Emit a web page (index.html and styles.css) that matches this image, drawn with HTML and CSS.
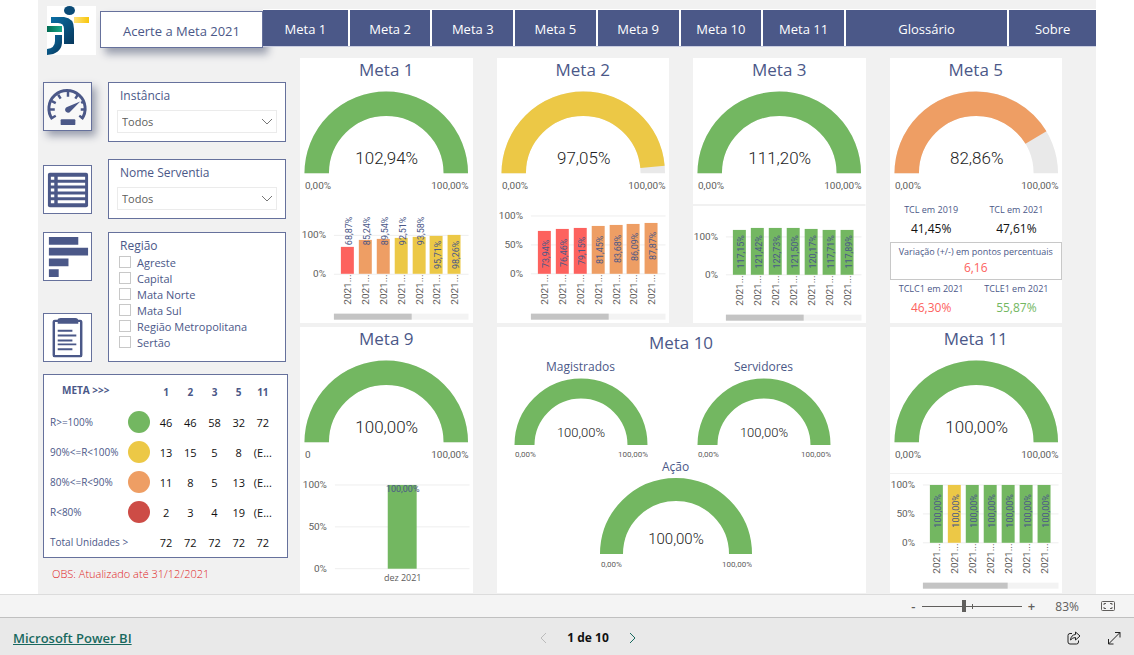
FILE: index.html
```html
<!DOCTYPE html>
<html lang="pt-BR">
<head>
<meta charset="utf-8">
<meta name="viewport" content="width=device-width, initial-scale=1">
<title>Acerte a Meta 2021</title>
<link rel="stylesheet" href="styles.css">
</head>
<body>
<main class="report">
  <header class="top">
    <svg class="logo" viewBox="0 0 49 49" aria-label="Logo" role="img">
      <defs>
        <linearGradient id="blue" x1="0" y1="0" x2="1" y2="1"><stop offset="0" stop-color="#0a6ea5"/><stop offset="1" stop-color="#08385c"/></linearGradient>
        <linearGradient id="green" x1="0" x2="1"><stop offset="0" stop-color="#006b52"/><stop offset="1" stop-color="#19a98a"/></linearGradient>
        <linearGradient id="gold" x1="0" x2="1"><stop offset="0" stop-color="#ffe27a"/><stop offset="1" stop-color="#f8c60c"/></linearGradient>
      </defs>
      <rect width="49" height="49" fill="#fff"/>
      <ellipse cx="22.5" cy="4.5" rx="5.5" ry="4.5" fill="#0a4a76"/>
      <path d="M4 11H17Q27 12 27 23V38H17V23Q17 17 11 17H4Z" fill="url(#blue)"/>
      <path d="M8 29H15V37Q14 48 0 49V43Q8 42 8 35Z" fill="url(#blue)"/>
      <rect x="27" y="11" width="15" height="6" fill="url(#gold)"/>
      <rect x="0" y="20" width="15" height="6" fill="url(#green)"/>
    </svg>
    <nav class="tabs" aria-label="Páginas">
      <button class="tab tab-active" type="button">Acerte a Meta 2021</button>
      <div class="tab-strip">
        <button class="tab" type="button">Meta 1</button>
        <button class="tab" type="button">Meta 2</button>
        <button class="tab" type="button">Meta 3</button>
        <button class="tab" type="button">Meta 5</button>
        <button class="tab" type="button">Meta 9</button>
        <button class="tab" type="button">Meta 10</button>
        <button class="tab" type="button">Meta 11</button>
        <button class="tab tab-wide" type="button">Glossário</button>
        <button class="tab" type="button">Sobre</button>
      </div>
    </nav>
  </header>

  <div class="content">
    <aside class="side">
      <div class="filters">
        <button class="icon-button icon-active" type="button" aria-label="Painel">
          <svg viewBox="0 0 48 48">
            <path d="M8.5 37A18.5 18.5 0 1 1 38.5 37" fill="none" stroke="#4b5888" stroke-width="3"/>
            <path d="M24.5 9V14M14.500 12L17 16M8 18.500L12 20.500M6 27H11M7.500 36L12 33.500M34.500 12L32 16M41 18.500L38 20.500M43 27H37.500M40 36L36 33.500" stroke="#4b5888" stroke-width="2.5"/>
            <path d="M37 19L27 29A3 3 0 1 1 23.5 24.500Z" fill="#4b5888"/>
            <rect x="17" y="37" width="15" height="6" rx="1" fill="#4b5888"/>
          </svg>
        </button>
        <section class="box">
          <label class="box-title" for="instancia">Instância</label>
          <span class="select"><select id="instancia"><option>Todos</option></select>
            <svg viewBox="0 0 12 7"><path d="M1 1L6 6L11 1"/></svg></span>
        </section>

        <button class="icon-button" type="button" aria-label="Tabela">
          <svg viewBox="0 0 48 48">
            <rect x="4" y="7" width="41" height="35" rx="2" fill="#4b5888"/>
            <path d="M7 12.5H10.5M7 18.5H10.5M7 24.5H10.5M7 30.5H10.5M7 36.5H10.5M14 12.5H42M14 18.5H42M14 24.5H42M14 30.5H42M14 36.5H42" stroke="#fff" stroke-width="3"/>
          </svg>
        </button>
        <section class="box">
          <label class="box-title" for="serventia">Nome Serventia</label>
          <span class="select"><select id="serventia"><option>Todos</option></select>
            <svg viewBox="0 0 12 7"><path d="M1 1L6 6L11 1"/></svg></span>
        </section>

        <div class="icon-stack">
          <button class="icon-button" type="button" aria-label="Gráfico">
            <svg viewBox="0 0 48 48"><path d="M5 4H35V12H5ZM5 15H45V23H5ZM5 26H25V34H5ZM5 37H15V45H5Z" fill="#4b5888"/></svg>
          </button>
          <button class="icon-button" type="button" aria-label="Relatório">
            <svg viewBox="0 0 48 48">
              <rect x="10" y="7" width="28" height="36" rx="1" fill="none" stroke="#4b5888" stroke-width="2.5"/>
              <path d="M14 6Q14 4 17 4H32Q35 4 35 7V10H14Z" fill="#4b5888"/>
              <path d="M14 17H29M14 22H33M14 27H29M14 31H33M14 36H29" stroke="#4b5888" stroke-width="2"/>
            </svg>
          </button>
        </div>
        <fieldset class="box region">
          <legend class="box-title">Região</legend>
          <label><input type="checkbox">Agreste</label>
          <label><input type="checkbox">Capital</label>
          <label><input type="checkbox">Mata Norte</label>
          <label><input type="checkbox">Mata Sul</label>
          <label><input type="checkbox">Região Metropolitana</label>
          <label><input type="checkbox">Sertão</label>
        </fieldset>
      </div>

      <div class="summary">
        <table>
          <colgroup><col class="col-name"><col class="col-dot"><col><col><col><col><col></colgroup>
          <thead><tr><th class="corner" colspan="2" scope="col">META &gt;&gt;&gt;</th><th scope="col">1</th><th scope="col">2</th><th scope="col">3</th><th scope="col">5</th><th scope="col">11</th></tr></thead>
          <tbody>
            <tr><th scope="row">R&gt;=100%</th><td><i class="dot green"></i></td><td>46</td><td>46</td><td>58</td><td>32</td><td>72</td></tr>
            <tr><th scope="row">90%&lt;=R&lt;100%</th><td><i class="dot yellow"></i></td><td>13</td><td>15</td><td>5</td><td>8</td><td>(E...</td></tr>
            <tr><th scope="row">80%&lt;=R&lt;90%</th><td><i class="dot orange"></i></td><td>11</td><td>8</td><td>5</td><td>13</td><td>(E...</td></tr>
            <tr><th scope="row">R&lt;80%</th><td><i class="dot red"></i></td><td>2</td><td>3</td><td>4</td><td>19</td><td>(E...</td></tr>
            <tr><th scope="row">Total Unidades &gt;</th><td></td><td>72</td><td>72</td><td>72</td><td>72</td><td>72</td></tr>
          </tbody>
        </table>
      </div>
      <p class="note">OBS: Atualizado até 31/12/2021</p>
    </aside>

    <div class="cards">
      <section class="card">
        <h2>Meta 1</h2>
        <svg class="gauge" viewBox="0 0 173 122">
          <path class="track" d="M16.750 91.500A69.750 69.750 0 0 1 156.250 91.500"/>
          <path class="arc s-green" d="M16.750 91.500A69.750 69.750 0 0 1 156.250 91.500"/>
          <text class="value" x="87" y="82">102,94%</text><text class="min" x="5" y="107">0,00%</text><text class="max" x="169" y="107">100,00%</text>
        </svg>
        <svg class="chart" viewBox="0 0 173 120">
          <path class="grid" d="M34 31.500H169M34 70.500H169"/>
          <text class="axis" x="26" y="34">100%</text><text class="axis" x="26" y="73">0%</text>
          <rect class="f-coral" x="41" y="43" width="13" height="27"/>
          <g class="f-orange"><rect x="59" y="36" width="13" height="34"/><rect x="77" y="35" width="13" height="35"/></g>
          <g class="f-yellow"><rect x="95" y="34" width="13" height="36"/><rect x="113" y="33" width="13" height="37"/><rect x="130" y="32" width="13" height="38"/><rect x="148" y="31" width="13" height="39"/></g>
          <g class="labels" transform="rotate(-90)"><text x="-27" y="52">68,87%</text><text x="-27" y="70">85,24%</text><text x="-27" y="88">89,54%</text><text x="-27" y="106">92,51%</text><text x="-27" y="124">93,58%</text><text x="-51" y="141">95,71%</text><text x="-51" y="159">98,26%</text></g>
          <g class="cats" transform="rotate(-90)"><text x="-101" y="51">2021...</text><text x="-101" y="69">2021...</text><text x="-101" y="87">2021...</text><text x="-101" y="105">2021...</text><text x="-101" y="123">2021...</text><text x="-101" y="140">2021...</text><text x="-101" y="158">2021...</text></g>
          <rect class="scroll" x="34" y="110" width="135" height="6"/><rect class="thumb" x="34" y="110" width="78" height="6"/>
        </svg>
      </section>

      <section class="card">
        <h2>Meta 2</h2>
        <svg class="gauge" viewBox="0 0 173 122">
          <path class="track" d="M16.750 91.500A69.750 69.750 0 0 1 156.250 91.500"/>
          <path class="arc s-yellow" pathLength="100" stroke-dasharray="97.05 100" d="M16.750 91.500A69.750 69.750 0 0 1 156.250 91.500"/>
          <text class="value" x="87" y="82">97,05%</text><text class="min" x="5" y="107">0,00%</text><text class="max" x="169" y="107">100,00%</text>
        </svg>
        <svg class="chart" viewBox="0 0 173 120">
          <path class="grid" d="M34 12H169M34 41H169M34 70H169"/>
          <text class="axis" x="26" y="15">100%</text><text class="axis" x="26" y="44">50%</text><text class="axis" x="26" y="73">0%</text>
          <g class="f-coral"><rect x="41" y="27" width="13" height="43"/><rect x="59" y="25" width="13" height="45"/><rect x="77" y="24" width="13" height="46"/></g>
          <g class="f-orange"><rect x="95" y="22" width="13" height="48"/><rect x="113" y="21" width="13" height="49"/><rect x="130" y="20" width="13" height="50"/><rect x="148" y="19" width="13" height="51"/></g>
          <g class="labels" transform="rotate(-90)"><text x="-50" y="52">73,94%</text><text x="-49" y="70">76,46%</text><text x="-47" y="88">79,15%</text><text x="-46" y="106">81,45%</text><text x="-45" y="124">83,68%</text><text x="-43" y="141">86,09%</text><text x="-42" y="159">87,87%</text></g>
          <g class="cats" transform="rotate(-90)"><text x="-101" y="51">2021...</text><text x="-101" y="69">2021...</text><text x="-101" y="87">2021...</text><text x="-101" y="105">2021...</text><text x="-101" y="123">2021...</text><text x="-101" y="140">2021...</text><text x="-101" y="158">2021...</text></g>
          <rect class="scroll" x="34" y="110" width="135" height="6"/><rect class="thumb" x="34" y="110" width="78" height="6"/>
        </svg>
      </section>

      <section class="card">
        <h2>Meta 3</h2>
        <svg class="gauge" viewBox="0 0 173 122">
          <path class="track" d="M16.750 91.500A69.750 69.750 0 0 1 156.250 91.500"/>
          <path class="arc s-green" d="M16.750 91.500A69.750 69.750 0 0 1 156.250 91.500"/>
          <text class="value" x="87" y="82">111,20%</text><text class="min" x="5" y="107">0,00%</text><text class="max" x="169" y="107">100,00%</text>
        </svg>
        <svg class="chart" viewBox="0 0 173 120">
          <rect class="divider" x="0" y="0" width="173" height="2"/>
          <path class="grid" d="M33 33H169M33 71H169"/>
          <text class="axis" x="25" y="36">100%</text><text class="axis" x="25" y="74">0%</text>
          <g class="f-green"><rect x="40" y="26" width="13" height="45"/><rect x="58" y="24" width="13" height="47"/><rect x="76" y="24" width="13" height="47"/><rect x="94" y="24" width="13" height="47"/><rect x="112" y="25" width="13" height="46"/><rect x="130" y="26" width="13" height="45"/><rect x="148" y="26" width="13" height="45"/></g>
          <g class="labels" transform="rotate(-90)"><text x="-48" y="51">117,15%</text><text x="-48" y="69">121,42%</text><text x="-48" y="87">122,73%</text><text x="-48" y="105">121,50%</text><text x="-48" y="123">120,17%</text><text x="-48" y="141">117,71%</text><text x="-48" y="159">117,89%</text></g>
          <g class="cats" transform="rotate(-90)"><text x="-102" y="50">2021...</text><text x="-102" y="68">2021...</text><text x="-102" y="86">2021...</text><text x="-102" y="104">2021...</text><text x="-102" y="122">2021...</text><text x="-102" y="140">2021...</text><text x="-102" y="158">2021...</text></g>
          <rect class="scroll" x="33" y="111" width="136" height="6"/><rect class="thumb" x="33" y="111" width="78" height="6"/>
        </svg>
      </section>

      <section class="card">
        <h2>Meta 5</h2>
        <svg class="gauge" viewBox="0 0 173 122">
          <path class="track" d="M16.750 91.500A69.750 69.750 0 0 1 156.250 91.500"/>
          <path class="arc s-orange" pathLength="100" stroke-dasharray="82.86 100" d="M16.750 91.500A69.750 69.750 0 0 1 156.250 91.500"/>
          <text class="value" x="87" y="82">82,86%</text><text class="min" x="5" y="107">0,00%</text><text class="max" x="169" y="107">100,00%</text>
        </svg>
        <dl class="pair black"><div><dt>TCL em 2019</dt><dd>41,45%</dd></div><div><dt>TCL em 2021</dt><dd>47,61%</dd></div></dl>
        <dl class="variation"><dt>Variação (+/-) em pontos percentuais</dt><dd class="coral">6,16</dd></dl>
        <dl class="pair"><div><dt>TCLC1 em 2021</dt><dd class="coral">46,30%</dd></div><div><dt>TCLE1 em 2021</dt><dd class="lime">55,87%</dd></div></dl>
      </section>

      <section class="card">
        <h2>Meta 9</h2>
        <svg class="gauge" viewBox="0 0 173 122">
          <path class="track" d="M16.750 91.500A69.750 69.750 0 0 1 156.250 91.500"/>
          <path class="arc s-green" d="M16.750 91.500A69.750 69.750 0 0 1 156.250 91.500"/>
          <text class="value" x="87" y="82">100,00%</text><text class="min" x="5" y="107">0</text><text class="max" x="169" y="107">100,00%</text>
        </svg>
        <svg class="chart" viewBox="0 0 173 120">
          <path class="grid" d="M35 12H170M35 54H170M35 96H170"/>
          <text class="axis" x="27" y="15">100%</text><text class="axis" x="27" y="57">50%</text><text class="axis" x="27" y="99">0%</text>
          <rect class="f-green" x="88" y="12" width="29" height="84"/>
          <g class="labels"><text x="103" y="19">100,00%</text></g>
          <text class="month" x="103" y="108">dez 2021</text>
        </svg>
      </section>

      <section class="card card-wide">
        <h2>Meta 10</h2>
        <div class="row row-two">
          <figure>
            <figcaption>Magistrados</figcaption>
            <svg class="gauge-small" viewBox="0 0 134 81">
              <path class="arc-small s-green" d="M10.500 68A56.500 56.500 0 0 1 123.500 68"/>
              <text class="value-small" x="67" y="60">100,00%</text><text class="min-small" x="1" y="80">0,00%</text><text class="max-small" x="134" y="80">100,00%</text>
            </svg>
          </figure>
          <figure>
            <figcaption>Servidores</figcaption>
            <svg class="gauge-small" viewBox="0 0 134 81">
              <path class="arc-small s-green" d="M10.500 68A56.500 56.500 0 0 1 123.500 68"/>
              <text class="value-small" x="67" y="60">100,00%</text><text class="min-small" x="1" y="80">0,00%</text><text class="max-small" x="134" y="80">100,00%</text>
            </svg>
          </figure>
        </div>
        <div class="row row-one">
          <figure>
            <figcaption>Ação</figcaption>
            <svg class="gauge-mid" viewBox="0 0 152 92">
              <path class="arc-mid s-green" d="M11.500 77A64.500 64.500 0 0 1 140.500 77"/>
              <text class="value-mid" x="76" y="67">100,00%</text><text class="min-small" x="1" y="90">0,00%</text><text class="max-small" x="152" y="90">100,00%</text>
            </svg>
          </figure>
        </div>
      </section>

      <section class="card">
        <h2>Meta 11</h2>
        <svg class="gauge" viewBox="0 0 173 122">
          <path class="track" d="M16.750 91.500A69.750 69.750 0 0 1 156.250 91.500"/>
          <path class="arc s-green" d="M16.750 91.500A69.750 69.750 0 0 1 156.250 91.500"/>
          <text class="value" x="87" y="82">100,00%</text><text class="min" x="5" y="107">0,00%</text><text class="max" x="169" y="107">100,00%</text>
        </svg>
        <svg class="chart" viewBox="0 0 173 120">
          <rect class="divider" x="0" y="0" width="173" height="1"/>
          <path class="grid" d="M33 12H169M33 41H169M33 70H169"/>
          <text class="axis" x="25" y="15">100%</text><text class="axis" x="25" y="44">50%</text><text class="axis" x="25" y="73">0%</text>
          <g class="f-green"><rect x="40" y="12" width="13" height="58"/><rect x="76" y="12" width="13" height="58"/><rect x="94" y="12" width="13" height="58"/><rect x="112" y="12" width="13" height="58"/><rect x="130" y="12" width="13" height="58"/><rect x="148" y="12" width="13" height="58"/></g>
          <rect class="f-yellow" x="58" y="12" width="13" height="58"/>
          <g class="labels" transform="rotate(-90)"><text x="-38" y="51">100,00%</text><text x="-38" y="69">100,00%</text><text x="-38" y="87">100,00%</text><text x="-38" y="105">100,00%</text><text x="-38" y="123">100,00%</text><text x="-38" y="141">100,00%</text><text x="-38" y="159">100,00%</text></g>
          <g class="cats" transform="rotate(-90)"><text x="-101" y="50">2021...</text><text x="-101" y="68">2021...</text><text x="-101" y="86">2021...</text><text x="-101" y="104">2021...</text><text x="-101" y="122">2021...</text><text x="-101" y="140">2021...</text><text x="-101" y="158">2021...</text></g>
          <rect class="scroll" x="33" y="110" width="136" height="6"/><rect class="thumb" x="33" y="110" width="85" height="6"/>
        </svg>
      </section>
    </div>
  </div>
</main>

<div class="zoombar">
  <button type="button" aria-label="Reduzir">-</button>
  <span class="slider"><input type="range" min="0" max="100" value="41" aria-label="Zoom"></span>
  <button type="button" aria-label="Ampliar">+</button>
  <output class="zoom-value">83%</output>
  <button type="button" aria-label="Ajustar à página">
    <svg width="14" height="10" viewBox="0 0 14 10"><rect x=".5" y=".5" width="13" height="9" rx="1"/><path d="M3 4V2.500H5M9 2.500H11V4M11 6V7.500H9M5 7.500H3V6"/></svg>
  </button>
</div>

<footer class="footer">
  <a href="#">Microsoft Power BI</a>
  <div class="pager">
    <button class="prev" type="button" disabled aria-label="Anterior"><svg width="7" height="12" viewBox="0 0 7 12"><path d="M6 1L1 6L6 11"/></svg></button>
    <span>1 de 10</span>
    <button class="next" type="button" aria-label="Próxima"><svg width="7" height="12" viewBox="0 0 7 12"><path d="M1 1L6 6L1 11"/></svg></button>
  </div>
  <div class="actions">
    <button type="button" aria-label="Compartilhar"><svg width="14" height="14" viewBox="0 0 14 14"><path d="M5 2.500H3Q1 2.500 1 4.500V11Q1 13 3 13H9.500Q11.500 13 11.500 11V9.500M8.500 1L13 5L8.500 9V6.500Q5.500 6.500 3.500 9Q4 4 8.500 3.500Z"/></svg></button>
    <button type="button" aria-label="Tela cheia"><svg width="14" height="14" viewBox="0 0 14 14"><path d="M8 1.500H13V6.500M13 1.500L1.500 13M1.500 8V13H6.500"/></svg></button>
  </div>
</footer>
</body>
</html>
```
FILE: styles.css
```css
* { box-sizing: border-box; }

body {
  margin: 0;
  min-height: 100vh;
  display: flex;
  flex-direction: column;
  background: #fff;
  color: #4b5888;
  font-family: "Open Sans", "Noto Sans", sans-serif;
  font-size: 11px;
}

button, select, input { font: inherit; color: inherit; margin: 0; }
button { border: 0; padding: 0; background: none; cursor: pointer; }
svg { display: block; }
h2, p, dl, dd, figure { margin: 0; }

.report { flex: 1; margin: 0 38px; background: #f1f1f1; }

/* Top navigation */
.top { display: flex; gap: 4px; padding: 6px 0 3px 9px; }
.logo { width: 49px; height: 49px; flex: none; }
.tabs { flex: 1; display: flex; align-items: flex-start; padding-top: 3px; }
.tab { flex: 81 1 0; height: 36px; background: #4b5888; color: #fff; font-size: 13px; font-weight: 500; white-space: nowrap; }
.tab:first-child { flex-grow: 85; }
.tab:last-child { flex-grow: 87; }
.tab.tab-wide { flex-grow: 162; }
.tab.tab-active {
  flex: 0 0 163px;
  height: 37px;
  margin-top: 2px;
  padding-top: 2px;
  background: #fff;
  color: #4b5888;
  border: 1px solid #66719c;
  font-weight: 400;
  box-shadow: 5px 6px 8px #9a9fae;
}
.tab-strip { position: relative; flex: 1; display: flex; gap: 2px; background: #fff; border-top: 1px solid #fff; border-bottom: 1px solid #c9cde0; }
.tab-strip .tab { padding-top: 2px; }

/* Sidebar */
.content { display: flex; align-items: flex-start; }
.side { flex: none; width: 262px; padding: 24px 12px 0 5px; }
.filters { display: grid; grid-template-columns: 49px 178px; column-gap: 16px; row-gap: 13px; align-items: center; }
.icon-button { width: 49px; height: 49px; background: #fff; border: 1px solid #66719c; }
.icon-active { align-self: start; margin-bottom: 15px; background: #f8f8f8; box-shadow: 4px 5px 8px #9a9fae; }
.icon-stack { display: flex; flex-direction: column; justify-content: space-between; align-self: stretch; }
.box { align-self: start; background: #fff; border: 1px solid #66719c; padding: 4px 8px 8px; margin: 0; }
.box-title { display: block; padding: 0 3px; font-size: 12px; line-height: 17px; }
.select { display: block; position: relative; margin-top: 6px; }
.select select { width: 100%; height: 23px; padding: 0 4px; border: 1px solid #ebebeb; border-radius: 0; background: #fff; color: #605e5c; appearance: none; }
.select svg { position: absolute; right: 4px; top: 8px; width: 12px; height: 7px; fill: none; stroke: #777; pointer-events: none; }
.region { display: flex; flex-direction: column; min-width: 0; padding-bottom: 11px; }
.region legend { float: left; width: 100%; }
.region label { display: flex; align-items: center; gap: 6px; height: 16px; padding-left: 2px; white-space: nowrap; }
.region input { appearance: none; width: 12px; height: 12px; border: 1px solid #c8c8c8; background: #fff; }

/* Range summary */
.summary { margin-top: 12px; padding: 2px 12px 0 6px; background: #fff; border: 1px solid #66719c; }
.summary table { width: 100%; table-layout: fixed; border-collapse: collapse; }
.summary th, .summary td { height: 30px; padding: 0; text-align: center; white-space: nowrap; }
.summary td { color: #111; font-size: 11px; }
.col-name { width: 74px; }
.col-dot { width: 30px; }
.summary tbody th { text-align: left; font-size: 10px; font-weight: 400; }
.summary thead th { font-size: 10px; font-weight: 700; }
.summary .corner { text-align: left; padding: 0 0 4px 12px; }
.dot { display: block; width: 22px; height: 22px; margin: 0 auto; border-radius: 50%; }
.green { background: #73b761; }
.yellow { background: #ecc846; }
.orange { background: #ee9e64; }
.red { background: #cd4c46; }
.note { padding: 7px 0 0 9px; color: #e0211b; font-size: 11px; font-weight: 300; line-height: 17px; }

/* Cards */
.cards { flex: 1; display: grid; grid-template-columns: repeat(4, minmax(0, 1fr)); gap: 4px 24px; padding-right: 34px; }
.card { background: #fff; }
.card-wide { grid-column: span 2; }
.card h2 { font-size: 17px; font-weight: 400; line-height: 24px; text-align: center; }
.card-wide h2 { padding-top: 4px; }
.gauge, .chart { width: 100%; height: auto; }

text { font-family: Roboto, "Open Sans", sans-serif; fill: #605e5c; font-size: 10px; }
.track, .arc { fill: none; stroke: #e9e9e9; stroke-width: 24.5; }
.arc-small { fill: none; stroke-width: 20; }
.arc-mid { fill: none; stroke-width: 23; }
.arc.s-green, .s-green { stroke: #73b761; }
.arc.s-yellow { stroke: #ecc846; }
.arc.s-orange { stroke: #ee9e64; }
.value, .value-small, .value-mid { text-anchor: middle; font-weight: 300; fill: #222; font-size: 17px; }
.value-small { font-size: 13px; }
.value-mid { font-size: 15px; }
.max, .max-small, .axis { text-anchor: end; }
.min-small, .max-small { font-size: 8px; }
.f-coral { fill: #fd625e; }
.f-orange { fill: #ee9e64; }
.f-yellow { fill: #ecc846; }
.f-green { fill: #73b761; }
.grid { stroke: #eee; fill: none; }
.labels text { font-size: 9px; fill: #4b5888; text-anchor: middle; }
.month { text-anchor: middle; font-family: "Open Sans", sans-serif; font-size: 9px; }
.scroll { fill: #f3f3f3; }
.thumb { fill: #c4c4c4; }
.divider { fill: #f1f1f1; }

/* Meta 5 indicators */
.pair { display: grid; grid-template-columns: 1fr 1fr; padding: 0 6px 0 0; text-align: center; font-size: 9px; height: 38px; }
.pair div:last-child { padding-left: 4px; }
.pair dt, .variation dt { line-height: 12px; white-space: nowrap; }
.pair dd, .variation dd { font-size: 12px; line-height: 20px; }
.pair dd { padding-top: 3px; }
.black dd { color: #111; }
.variation { height: 38px; padding-top: 3px; border: 1px solid #c8c8c8; text-align: center; font-size: 9px; }
.variation + .pair { margin-top: 3px; }
.coral { color: #fd625e; }
.lime { color: #73b761; }

/* Meta 10 gauges */
.row { display: flex; justify-content: center; }
.row-two { gap: 49px; padding: 3px 18px 0 0; }
.row-one { padding-right: 11px; }
.gauge-small { width: 134px; }
.gauge-mid { width: 152px; }
figcaption { margin-bottom: 2px; font-size: 12px; line-height: 17px; text-align: center; }

/* Zoom bar and footer */
.zoombar { display: flex; align-items: center; justify-content: flex-end; height: 24px; padding-right: 19px; background: #f4f4f4; border-top: 1px solid #dcdcdc; border-bottom: 1px solid #c0c0c0; color: #605e5c; font-size: 12px; }
.zoombar button { min-width: 14px; font-size: 13px; font-weight: 600; line-height: 20px; }
.zoombar svg { fill: none; stroke: #605e5c; }
.slider { position: relative; display: flex; width: 100px; margin: 0 2px; }
.slider::after { content: ""; position: absolute; left: 50px; top: 4px; width: 1px; height: 5px; background: #605e5c; }
.slider input { appearance: none; width: 100%; height: 12px; background: linear-gradient(#605e5c, #605e5c) center / 100% 1px no-repeat; }
.slider input::-webkit-slider-thumb { appearance: none; width: 4px; height: 12px; background: #605e5c; }
.zoom-value { margin: 0 22px 0 17px; }

.footer { display: grid; grid-template-columns: 1fr auto 1fr; align-items: center; height: 37px; padding: 2px 13px 0; background: #e9e9e9; font-size: 13px; }
.footer a { color: #19695f; font-weight: 600; }
.footer svg { fill: none; stroke: #222; }
.pager { display: flex; align-items: center; gap: 20px; margin-left: 42px; color: #111; font-size: 12px; font-weight: 700; }
.footer .prev svg { stroke: #bbb; }
.footer .next svg { stroke: #19695f; }
.actions { display: flex; justify-content: flex-end; gap: 26px; }
```
